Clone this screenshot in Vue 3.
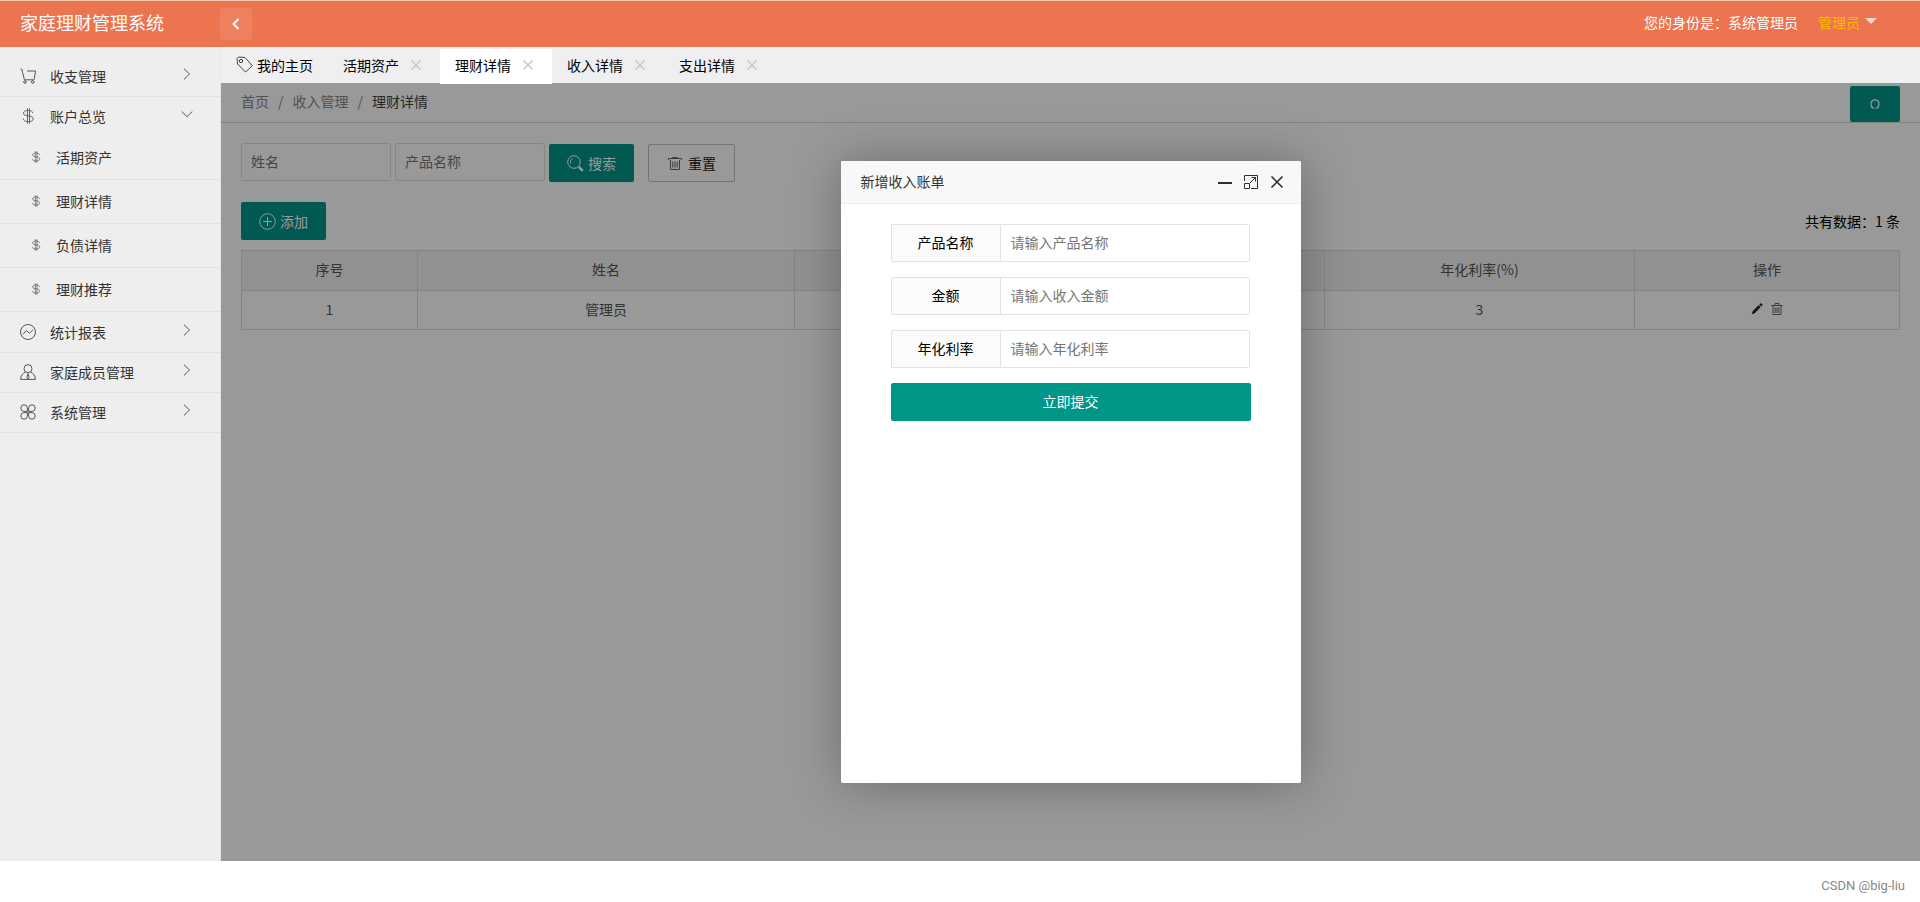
<script setup>
import { ref } from 'vue'

const menu = [
  { name: '收支管理', icon: 'cart' },
  {
    name: '账户总览',
    icon: 'dollar',
    open: true,
    children: ['活期资产', '理财详情', '负债详情', '理财推荐']
  },
  { name: '统计报表', icon: 'chart' },
  { name: '家庭成员管理', icon: 'user' },
  { name: '系统管理', icon: 'clover' }
]

const tabs = ['活期资产', '理财详情', '收入详情', '支出详情']
const activeTab = ref('理财详情')

const fields = [
  { id: 'product', label: '产品名称', hint: '请输入产品名称' },
  { id: 'amount', label: '金额', hint: '请输入收入金额' },
  { id: 'rate', label: '年化利率', hint: '请输入年化利率' }
]
</script>

<template>
  <div class="page">
    <header class="top">
      <h1 class="brand">家庭理财管理系统</h1>
      <button class="fold" type="button" aria-label="收起">
        <svg width="8" height="12" viewBox="0 0 8 12"><path d="M6.5 1 1.5 6l5 5" fill="none" stroke="#fff" stroke-width="1.8" /></svg>
      </button>
      <div class="identity">
        <span>您的身份是：系统管理员</span>
        <a class="account" href="#">管理员<i class="caret"></i></a>
      </div>
    </header>

    <div class="body">
      <nav class="side">
        <template v-for="item in menu" :key="item.name">
          <a class="item" :class="{ open: item.open }" href="#">
            <svg class="ico" viewBox="0 0 16 16" width="16" height="16">
              <g v-if="item.icon === 'cart'">
                <path d="M.5 1.2h1.3l2.6 10.6h9.3M14 11.8 15.6 3H7" />
                <circle cx="5" cy="14" r="1.3" /><circle cx="12.8" cy="14" r="1.3" />
              </g>
              <g v-else-if="item.icon === 'dollar'">
                <path d="M12.8 5C12.500 3.200 10.800 2.400 8.200 2.400c-2.900 0-4.700 1-4.700 2.800 0 4 9.700 1.400 9.700 5.500 0 2-1.900 3-4.900 3-2.900 0-4.800-1-5.100-3.200M7.500.300v15.300M9.500.300v15.300" stroke-width=".9" />
              </g>
              <g v-else-if="item.icon === 'chart'">
                <circle cx="8" cy="8" r="7.500" />
                <path d="m3 10.200 3.300-3.700 3.100 2.700L13 5.700" />
              </g>
              <g v-else-if="item.icon === 'user'">
                <circle cx="8" cy="4.600" r="4" />
                <path d="M5.600 8C2.600 9.300.600 11.500.600 15.400h14.800c0-3.900-2-6.100-5-7.400M8 9.500 6.900 13.500 8 15l1.100-1.500z" />
              </g>
              <g v-else>
                <path d="M7.400 7.400H3.800A3.300 3.300 0 1 1 7.400 3.800zM8.600 7.400V3.800a3.300 3.300 0 1 1 3.600 3.600zM7.400 8.600v3.600a3.300 3.300 0 1 1-3.600-3.600zM8.600 8.600h3.600a3.300 3.300 0 1 1-3.600 3.600z" />
              </g>
            </svg>
            <span class="name">{{ item.name }}</span>
            <svg class="arrow" viewBox="0 0 12 12" width="12" height="12">
              <path v-if="item.open" d="M.7 3.500 6 8.700l5.300-5.200" />
              <path v-else d="M3 .7 8.500 6 3 11.300" />
            </svg>
          </a>
          <div v-if="item.children" class="group">
            <a v-for="child in item.children" :key="child" class="sub" href="#">
              <svg class="ico" viewBox="0 0 10 12" width="10" height="12">
                <path d="M8.600 3.800C8.300 2.600 7 2 5 2S1.500 2.700 1.500 3.900C1.500 6.500 8.800 5 8.800 7.900c0 1.300-1.500 2.100-3.800 2.100S1.400 9.300 1.200 7.900M4.300.300v11.400M6 .300v11.400" stroke-width=".7" />
              </svg>
              <span>{{ child }}</span>
            </a>
          </div>
        </template>
      </nav>

      <div class="work">
        <div class="tabs">
          <a class="tab home" href="#">
            <svg width="17" height="17" viewBox="0 0 17 17" fill="none" stroke="#444" stroke-width="1">
              <path d="M1 2.500 1.600 8l8 8 6.700-6.300L9 1.500 2.500 1Z" /><circle cx="5" cy="5" r="1.700" />
            </svg>
            <span>我的主页</span>
          </a>
          <div v-for="tab in tabs" :key="tab" class="tab" :class="{ active: tab === activeTab }" @click="activeTab = tab">
            <span>{{ tab }}</span>
            <button class="shut" type="button" aria-label="关闭">
              <svg width="10" height="10" viewBox="0 0 10 10"><path d="m.5.500 9 9m0-9-9 9" stroke="#c2c2c2" stroke-width="1.300" /></svg>
            </button>
          </div>
        </div>

        <div class="frame">
          <main>
            <div class="crumbs">
              <div class="trail">
                <a href="#">首页</a><i>/</i><a href="#">收入管理</a><i>/</i><span>理财详情</span>
              </div>
              <button class="btn refresh" type="button" aria-label="刷新">
                <svg width="10" height="10" viewBox="0 0 10 10"><path d="M1.500 9h1.700C2 8.200.9 7 .9 4.900a4.100 4.100 0 1 1 8.200 0C9.100 7 8 8.200 6.800 9h1.700" fill="none" stroke="#fff" stroke-width="1.200" /></svg>
              </button>
            </div>

            <div class="content">
              <form class="search" @submit.prevent>
                <input type="text" placeholder="姓名" aria-label="姓名" />
                <input type="text" placeholder="产品名称" aria-label="产品名称" />
                <button class="btn" type="submit">
                  <svg width="17" height="17" viewBox="0 0 17 17" fill="none" stroke="#fff">
                    <circle cx="7" cy="7" r="6.300" /><path d="M3.500 8.500C3 6 4 4.300 5.700 3.500" /><path d="m11.800 11.800 4 4" stroke-width="2.400" />
                  </svg>
                  搜索
                </button>
                <button class="btn plain" type="reset">
                  <svg width="14" height="14" viewBox="0 0 14 14" fill="none" stroke="#666">
                    <path d="M.5 4V2.500h13V4M4.500 2.500v-1h5v1M2.500 4v9.500h9V4M4.800 5.500v6M7 5.500v6M9.200 5.500v6" />
                  </svg>
                  重置
                </button>
              </form>

              <div class="actions">
                <button class="btn" type="button">
                  <svg width="17" height="17" viewBox="0 0 17 17" fill="none" stroke="#fff">
                    <circle cx="8.500" cy="8.500" r="7.800" /><path d="M8.500 4v9M4 8.500h9" />
                  </svg>
                  添加
                </button>
                <span>共有数据：1 条</span>
              </div>

              <table>
                <colgroup>
                  <col class="c-no" /><col class="c-name" /><col /><col class="c-rate" /><col class="c-op" />
                </colgroup>
                <thead>
                  <tr><th>序号</th><th>姓名</th><th></th><th>年化利率(%)</th><th>操作</th></tr>
                </thead>
                <tbody>
                  <tr>
                    <td>1</td>
                    <td>管理员</td>
                    <td></td>
                    <td>3</td>
                    <td>
                      <div class="ops">
                        <button type="button" aria-label="编辑">
                          <svg width="12" height="12" viewBox="0 0 12 12"><path d="m.8 11.200.9-3 6-6.200 2 2-6 6.200zM8.300 1.400l1-1a.9.900 0 0 1 1.200 0l.8.800a.9.900 0 0 1 0 1.200l-1 1z" fill="#222" /></svg>
                        </button>
                        <button type="button" aria-label="删除">
                          <svg width="12" height="12" viewBox="0 0 12 12" fill="none" stroke="#666"><path d="M.3 2.500h11.400M4 2V.500h4V2M2 3v8.500h8V3M4.200 4.500V10M6 4.500V10M7.800 4.500V10" /></svg>
                        </button>
                      </div>
                    </td>
                  </tr>
                </tbody>
              </table>
            </div>
          </main>

          <div class="mask">
            <section class="dialog" role="dialog" aria-labelledby="dialog-title">
              <header class="bar">
                <h2 id="dialog-title">新增收入账单</h2>
                <button type="button" aria-label="最小化">
                  <svg width="14" height="14" viewBox="0 0 14 14"><path d="M0 8h14" stroke="#2e2d3c" stroke-width="2" /></svg>
                </button>
                <button type="button" aria-label="最大化">
                  <svg width="14" height="14" viewBox="0 0 14 14" fill="none" stroke="#2e2d3c">
                    <path d="M.5 6V.500h13v13H7M.5 8.500h5v5h-5zM6 8l5.500-5.500M7.500 2.500h4v4" />
                  </svg>
                </button>
                <button type="button" aria-label="关闭">
                  <svg width="14" height="14" viewBox="0 0 14 14"><path d="m1.500 1.500 11 11m0-11-11 11" stroke="#2e2d3c" stroke-width="1.600" /></svg>
                </button>
              </header>
              <form class="form" @submit.prevent>
                <div v-for="f in fields" :key="f.id" class="field">
                  <label :for="f.id">{{ f.label }}</label>
                  <input :id="f.id" type="text" :placeholder="f.hint" />
                </div>
                <button class="btn submit" type="submit">立即提交</button>
              </form>
            </section>
          </div>
        </div>
      </div>
    </div>

    <footer class="foot">CSDN @big-liu</footer>
  </div>
</template>

<style>
body {
  margin: 0;
  background: #fff;
}
</style>

<style scoped>
* {
  box-sizing: border-box;
}
.page {
  display: flex;
  flex-direction: column;
  min-height: 100vh;
  font: 14px/24px "Noto Sans CJK SC", sans-serif;
  color: #000;
}
a {
  color: inherit;
  text-decoration: none;
}
button,
input {
  font: inherit;
  margin: 0;
}
button {
  padding: 0;
  border: 0;
  background: none;
  cursor: pointer;
}
svg {
  display: block;
  flex: none;
}
.top {
  display: flex;
  align-items: center;
  height: 47px;
  padding-bottom: 4px;
  border-top: 1px solid #f6c9b0;
  background: #ec744f;
  color: #fff;
}
.brand {
  width: 220px;
  margin: 0;
  padding-left: 20px;
  font-size: 18px;
  font-weight: 400;
}
.fold {
  display: flex;
  align-items: center;
  justify-content: center;
  width: 32px;
  height: 32px;
  margin-top: 4px;
  border-radius: 2px;
  background: rgba(255, 255, 255, 0.1);
}
.identity {
  display: flex;
  gap: 20px;
  margin-left: auto;
  padding-right: 43px;
}
.account {
  display: flex;
  gap: 5px;
  color: #ffb800;
}
.caret {
  margin-top: 8px;
  border: 6px solid transparent;
  border-top-color: #fad5c9;
}
.body {
  display: flex;
  flex: 1;
}
.side {
  width: 221px;
  padding-top: 10px;
  border-right: 1px solid #e5e5e5;
  background: #eee;
  color: #333;
}
.item {
  display: flex;
  align-items: center;
  height: 40px;
  padding: 0 27px 2px 20px;
  border-bottom: 1px solid #e2e2e2;
}
.item.open {
  height: 39px;
  border-bottom: 0;
}
.group {
  padding-bottom: 1px;
}
.ico,
.arrow {
  fill: none;
  stroke: #555;
}
.name {
  flex: 1;
  padding-left: 14px;
}
.arrow {
  margin-bottom: 3px;
}
.sub {
  display: flex;
  align-items: center;
  gap: 15px;
  height: 44px;
  padding: 0 0 2px 31px;
  border-bottom: 1px solid #e2e2e2;
}
.work {
  display: flex;
  flex: 1;
  flex-direction: column;
  min-width: 0;
}
.tabs {
  position: relative;
  z-index: 1;
  display: flex;
  align-items: flex-end;
  height: 36px;
  background: #efeef0;
}
.tab {
  display: flex;
  align-items: center;
  gap: 12px;
  height: 35px;
  margin-bottom: -1px;
  padding: 0 19px 4px 15px;
}
.tab.home {
  gap: 4px;
  padding-right: 15px;
}
.tab.active {
  background: #fff;
}
.frame {
  position: relative;
  flex: 1;
}
.crumbs {
  display: flex;
  align-items: center;
  justify-content: space-between;
  height: 40px;
  padding: 0 20px;
  border-bottom: 1px solid #d8d8d8;
}
.trail {
  padding-bottom: 4px;
  color: #888;
}
.trail i {
  margin: 0 9px;
  font-style: normal;
}
.trail span {
  color: #444;
}
.btn {
  display: flex;
  align-items: center;
  justify-content: center;
  gap: 4px;
  height: 38px;
  padding: 0 18px;
  border-radius: 2px;
  background: #009688;
  color: #fff;
}
.btn.refresh {
  width: 50px;
  height: 36px;
  margin-top: 3px;
}
.btn.plain {
  gap: 6px;
  margin-left: 10px;
  padding: 0 18px 0 19px;
  border: 1px solid #c2c2c2;
  background: #fff;
  color: #222;
}
.content {
  padding: 20px;
}
.search {
  display: flex;
  align-items: flex-end;
  gap: 4px;
  height: 39px;
}
.search input,
.field input {
  height: 38px;
  padding: 0 10px 2px 9px;
  border: 1px solid #e2e2e2;
  background: #fff;
  outline: 0;
}
.search input {
  align-self: flex-start;
  width: 150px;
  border-radius: 2px;
}
input::placeholder {
  color: #757575;
  opacity: 1;
}
.actions {
  display: flex;
  align-items: center;
  justify-content: space-between;
  margin: 20px 0 10px;
}
table {
  width: 100%;
  border-collapse: collapse;
  table-layout: fixed;
  color: #555;
}
.c-no {
  width: 176px;
}
.c-name {
  width: 377px;
}
.c-rate {
  width: 310px;
}
.c-op {
  width: 265px;
}
th,
td {
  height: 40px;
  padding: 0 0 3px;
  border: 1px solid #dcdcdc;
  font-weight: 400;
  text-align: center;
}
td {
  height: 39px;
}
th {
  background: #f2f2f2;
}
.ops {
  display: flex;
  justify-content: center;
  gap: 8px;
}
.mask {
  position: absolute;
  inset: 0;
  display: flex;
  align-items: center;
  justify-content: center;
  background: rgba(0, 0, 0, 0.4);
}
.dialog {
  width: 460px;
  height: 80%;
  border-radius: 2px;
  background: #fff;
  box-shadow: 1px 1px 50px rgba(0, 0, 0, 0.3);
}
.bar {
  display: flex;
  align-items: center;
  gap: 12px;
  height: 43px;
  padding: 0 17px 0 20px;
  border-bottom: 1px solid #eee;
  border-radius: 2px 2px 0 0;
  background: #f8f8f8;
}
.bar h2 {
  flex: 1;
  margin: 0;
  padding-bottom: 2px;
  font-size: 14px;
  font-weight: 400;
  color: #333;
}
.form {
  display: flex;
  flex-direction: column;
  gap: 15px;
  padding: 20px 50px;
}
.field {
  display: flex;
  padding-right: 1px;
}
.field label {
  width: 109px;
  height: 38px;
  border: 1px solid #e2e2e2;
  border-right: 0;
  border-radius: 2px 0 0 2px;
  background: #fbfbfb;
  line-height: 34px;
  text-align: center;
}
.field input {
  flex: 1;
  min-width: 0;
  padding-left: 10px;
  border-radius: 0 2px 2px 0;
}
.btn.submit {
  padding-bottom: 2px;
}
.foot {
  display: flex;
  align-items: center;
  justify-content: flex-end;
  height: 41px;
  padding: 8px 15px 0;
  font: 13px/18px Roboto, "Liberation Sans", sans-serif;
  color: #888;
}
</style>
